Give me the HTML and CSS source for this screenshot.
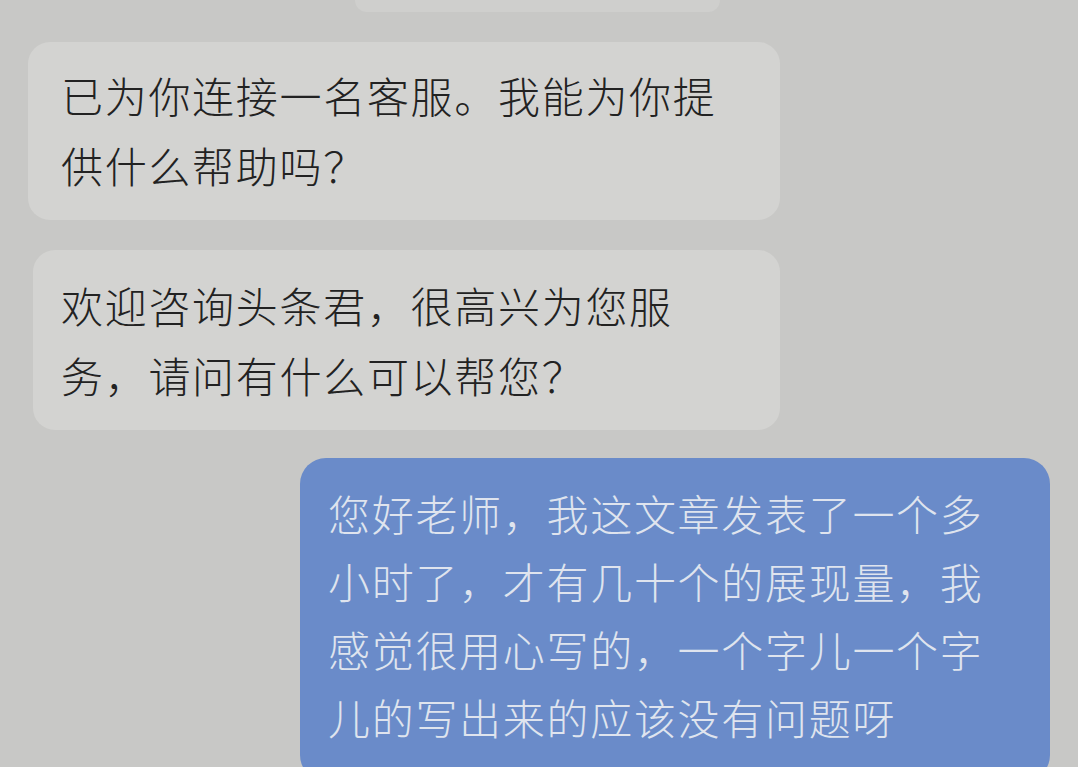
FILE: index.html
```html
<!DOCTYPE html>
<html lang="zh-CN">
<head>
<meta charset="utf-8">
<title>客服对话</title>
<link rel="stylesheet" href="styles.css">
</head>
<body>
<div class="chat">
  <div class="bubble-stub"></div>
  <div class="bubble incoming first">已为你连接一名客服。我能为你提供什么帮助吗？</div>
  <div class="bubble incoming second">欢迎咨询头条君，很高兴为您服务，请问有什么可以帮您？</div>
  <div class="bubble outgoing">您好老师，我这文章发表了一个多小时了，才有几十个的展现量，我感觉很用心写的，一个字儿一个字儿的写出来的应该没有问题呀</div>
</div>
</body>
</html>
```
FILE: styles.css
```css
html, body {
  margin: 0;
  padding: 0;
  background: #c8c8c6;
  height: 100%;
  overflow: hidden;
}
.chat {
  display: flex;
  flex-direction: column;
  align-items: flex-start;
  font-family: "Noto Sans CJK SC", "Noto Sans", sans-serif;
  font-size: 42px;
  letter-spacing: 1.7px;
  font-weight: 300;
}
.bubble-stub {
  margin-left: 355px;
  width: 365px;
  height: 12px;
  background: #cfcfcd;
  border-radius: 0 0 14px 14px;
}
.bubble {
  box-sizing: border-box;
  border-radius: 22px;
  line-height: 70px;
}
.incoming {
  background: #d3d3d1;
  color: #222222;
}
.first {
  margin-top: 30px;
  margin-left: 28px;
  width: 752px;
  padding: 18px 47px 20px 33px;
}
.second {
  margin-top: 30px;
  margin-left: 33px;
  width: 747px;
  padding: 20px 47px 20px 28px;
}
.outgoing {
  margin-top: 28px;
  margin-left: 300px;
  width: 750px;
  padding: 21px 50px 30px 28px;
  line-height: 68px;
  background: #6a8bc9;
  color: #dfe4ee;
  border-radius: 26px;
}
```
